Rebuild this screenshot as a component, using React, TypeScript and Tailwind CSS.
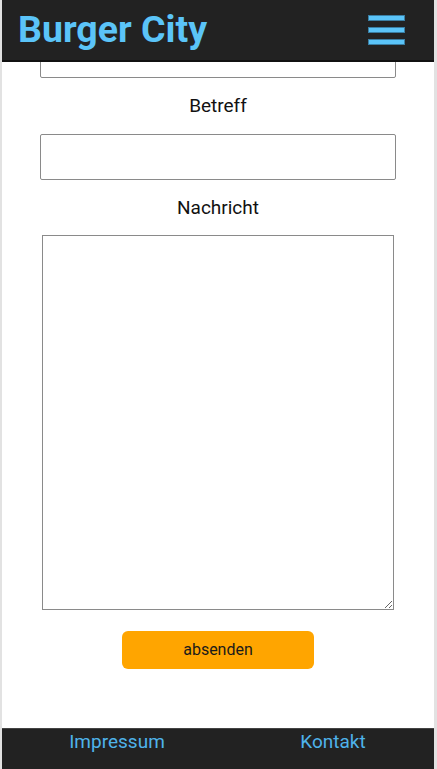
const Label = ({ text }: { text: string }) => (
  <label className="block text-center text-[19px] text-[#111] leading-[22px]">{text}</label>
)

export default function App() {
  return (
    <div className="h-[769px] w-[437px] flex bg-[#e2e2e2] font-['Roboto',sans-serif]">
      <div className="ml-[2px] w-[432px] flex flex-col bg-white">
        <header className="h-[62px] shrink-0 flex items-center justify-between bg-[#222] border-b-2 border-[#111] pl-[16px] pr-[29px] z-10">
          <h1 className="text-[37.5px] font-bold text-[#5bc4f8] leading-none">Burger City</h1>
          <div className="flex flex-col gap-[6px]">
            <span className="block w-[37px] h-[6px] bg-[#5bc4f8] border border-[#3a7ea3]" />
            <span className="block w-[37px] h-[6px] bg-[#5bc4f8] border border-[#3a7ea3]" />
            <span className="block w-[37px] h-[6px] bg-[#5bc4f8] border border-[#3a7ea3]" />
          </div>
        </header>
        <main className="flex-1 overflow-hidden">
          <form className="-mt-[30px] flex flex-col px-[38px]">
            <input className="h-[46px] w-full border border-[#8a8a8a] rounded-[2px]" />
            <div className="mt-[17px]">
              <Label text="Betreff" />
            </div>
            <input className="mt-[17px] h-[46px] w-full border border-[#8a8a8a] rounded-[2px]" />
            <div className="mt-[17px]">
              <Label text="Nachricht" />
            </div>
            <textarea className="mt-[16px] mx-[2px] h-[375px] border border-[#8a8a8a] resize" />
            <button
              type="button"
              className="mt-[21px] self-center w-[192px] h-[38px] rounded-[6px] bg-[#ffa500] text-[16px] text-[#1a1a1a]"
            >
              absenden
            </button>
          </form>
        </main>
        <footer className="h-[41px] shrink-0 flex overflow-hidden bg-[#222] border-t border-[#444] pl-[7px]">
          <a className="w-[216px] shrink-0 text-center text-[19px] text-[#4fb3ea] leading-[22px] pt-[2px]">Impressum</a>
          <a className="w-[216px] shrink-0 text-center text-[19px] text-[#4fb3ea] leading-[22px] pt-[2px]">Kontakt</a>
        </footer>
      </div>
    </div>
  )
}
